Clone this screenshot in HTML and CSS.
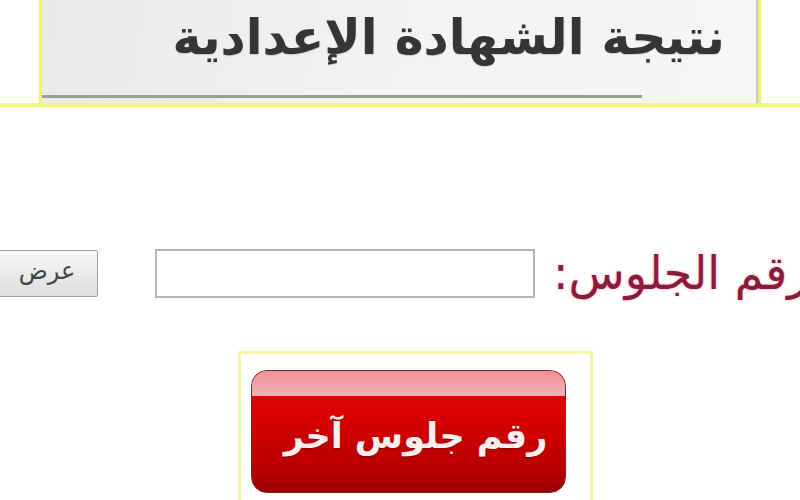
FILE: index.html
```html
<!DOCTYPE html>
<html lang="ar">
<head>
<meta charset="utf-8">
<title>نتيجة الشهادة الإعدادية</title>
<link rel="stylesheet" href="styles.css">
</head>
<body>
<div class="page">
  <div class="header-wrap">
    <div class="header-box">
      <h1 class="title">نتيجة الشهادة الإعدادية</h1>
      <div class="header-rule"></div>
    </div>
  </div>
  <div class="form-row">
    <button class="show-btn" type="button">عرض</button>
    <input class="seat-input" type="text">
    <label class="seat-label">رقم الجلوس:</label>
  </div>
  <div class="again-frame">
    <div class="again-btn">
      <div class="again-shine"></div>
      <span class="again-text">رقم جلوس آخر</span>
    </div>
  </div>
</div>
</body>
</html>
```
FILE: styles.css
```css
html, body {
  margin: 0;
  padding: 0;
  background: #ffffff;
}
.page {
  width: 800px;
  height: 500px;
  overflow: hidden;
  font-family: "DejaVu Sans", "Noto Sans", sans-serif;
}
.header-wrap {
  padding-left: 39px;
  border-bottom: 4px solid #f2f77a;
}
.header-box {
  width: 722px;
  height: 103px;
  box-sizing: border-box;
  border-left: 3px solid #eef36a;
  border-right: 3px solid #eef36a;
  background: linear-gradient(100deg, #e9e9e9 0%, #f3f3f3 50%, #f6f6f6 100%);
  box-shadow: inset -2px 0 0 #c9c9c9;
  display: flex;
  flex-direction: column;
}
.title {
  margin: 0;
  padding: 8px 33px 0 0;
  height: 86px;
  box-sizing: border-box;
  direction: rtl;
  text-align: right;
  font-size: 49px;
  line-height: 60px;
  font-weight: bold;
  color: #353535;
  text-shadow: 0 1px 1px rgba(0,0,0,0.15);
}
.header-rule {
  margin-top: 9px;
  width: 600px;
  height: 3px;
  background: #9c9c9c;
}
.form-row {
  display: flex;
  align-items: center;
  margin-top: 141px;
  height: 50px;
}
.show-btn {
  flex: none;
  margin-left: -4px;
  width: 102px;
  height: 47px;
  border: 1px solid #a0a0a0;
  border-radius: 2px;
  background: linear-gradient(#f7f7f7, #dedede);
  font-family: "DejaVu Sans", sans-serif;
  font-size: 24px;
  color: #444;
  padding: 0 0 4px 0;
}
.seat-input {
  flex: none;
  margin-left: 57px;
  width: 380px;
  height: 49px;
  box-sizing: border-box;
  border: 2px solid #b4b4b4;
  background: #fff;
  padding: 0;
}
.seat-label {
  margin-left: 18px;
  flex: none;
  direction: rtl;
  white-space: nowrap;
  font-size: 46px;
  line-height: 50px;
  color: #8c1a3c;
  text-shadow: 0 0 3px rgba(230, 60, 100, 0.45);
}
.again-frame {
  margin-top: 53px;
  margin-left: 238px;
  width: 355px;
  height: 160px;
  box-sizing: border-box;
  border: 3px solid #f3f7a6;
  border-bottom: none;
  padding: 16px 0 0 10px;
}
.again-btn {
  position: relative;
  width: 315px;
  height: 123px;
  box-sizing: border-box;
  border: 1px solid #7a2a2a;
  border-radius: 16px;
  background: linear-gradient(#e00808 0%, #d80000 40%, #b30000 85%, #9a0000 100%);
  display: flex;
  align-items: center;
  justify-content: center;
  overflow: hidden;
}
.again-shine {
  position: absolute;
  left: 0;
  top: 0;
  right: 0;
  height: 25px;
  background: linear-gradient(#ee8f96, #f4b4b4);
}
.again-text {
  position: relative;
  top: 4px;
  left: 7px;
  direction: rtl;
  font-size: 35px;
  font-weight: bold;
  color: #fbeeee;
  text-shadow: 0 1px 2px rgba(80,0,0,0.5);
}
```
